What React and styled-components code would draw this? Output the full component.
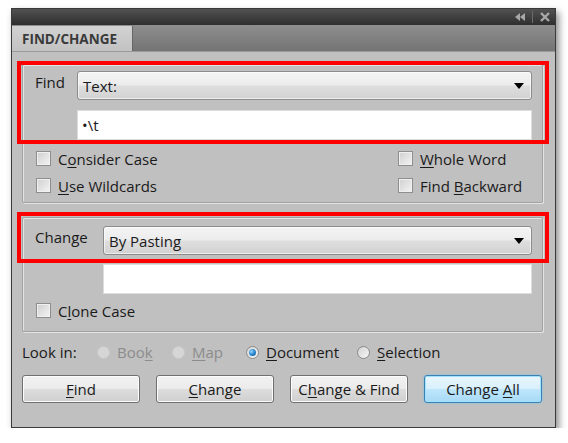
import React from "react";
import styled, { createGlobalStyle } from "styled-components";

const GlobalStyle = createGlobalStyle`
  body {
    margin: 0;
    background: #ffffff;
    font-family: "Open Sans", "Liberation Sans", sans-serif;
  }
  * {
    box-sizing: border-box;
  }
`;

const Window = styled.div`
  position: relative;
  margin: 8px 0 0 11px;
  width: 545px;
  height: 420px;
  border: 1px solid #3a3a3a;
  background: #c0c0c0;
  box-shadow: 3px 4px 7px rgba(0, 0, 0, 0.45);
  display: flex;
  flex-direction: column;
`;

const TitleBar = styled.div`
  height: 16px;
  background: linear-gradient(#525252, #2e2e2e);
  display: flex;
  justify-content: flex-end;
  align-items: center;
  padding-right: 2px;
`;

const TabBar = styled.div`
  height: 27px;
  background: linear-gradient(#8e8e8e, #747474);
  display: flex;
  align-items: flex-end;
  border-bottom: 1px solid #9a9a9a;
`;

const Tab = styled.div`
  width: 121px;
  height: 25px;
  background: linear-gradient(#d2d2d2, #c2c2c2);
  border-right: 1px solid #666;
  color: #3a3a3a;
  font-size: 13.5px;
  font-weight: 700;
  padding-left: 10px;
  display: flex;
  align-items: center;
`;

const Body = styled.div`
  flex: 1;
  padding: 12px 12px 0 10px;
  display: flex;
  flex-direction: column;
  color: #1a1a1a;
  font-size: 15px;
`;

const Group = styled.div`
  border: 1px solid #a2a2a2;
  border-radius: 2px;
  box-shadow: inset 1px 1px 0 #e4e4e4, 1px 1px 0 #e4e4e4;
  padding: ${(p) => p.$pt}px 10px ${(p) => p.$pb}px 12px;
  margin-bottom: ${(p) => p.$mb || 0}px;
`;

const FieldRow = styled.div`
  display: flex;
  align-items: center;
  margin-top: ${(p) => p.$mt || 0}px;
`;

const Label = styled.div`
  width: ${(p) => p.$w}px;
  flex: none;
  align-self: flex-start;
  line-height: 22px;
`;

const Select = styled.div`
  flex: 1;
  height: 29px;
  border: 1px solid #8c8c8c;
  border-radius: 3px;
  background: linear-gradient(#f4f4f4 0%, #ececec 48%, #dedede 52%, #d2d2d2 100%);
  box-shadow: inset 0 0 0 1px rgba(255, 255, 255, 0.6);
  display: flex;
  align-items: center;
  justify-content: space-between;
  padding: 0 7px 0 5px;
`;

const TextField = styled.div`
  flex: 1;
  height: 30px;
  background: #ffffff;
  border: 1px solid #dcdcdc;
  padding-left: 4px;
  display: flex;
  align-items: center;
  margin-left: ${(p) => p.$indent}px;
`;

const CheckGrid = styled.div`
  display: grid;
  grid-template-columns: 362px auto;
  grid-auto-rows: 27px;
  margin-top: ${(p) => p.$mt}px;
  padding-left: 1px;
`;

const CheckItem = styled.label`
  display: flex;
  align-items: center;
  gap: 7px;
`;

const Box = styled.span`
  width: 15px;
  height: 15px;
  border: 1px solid #8e8e8e;
  background: linear-gradient(135deg, #cfcfcf, #f4f4f4);
  box-shadow: inset 0 0 0 1px #f0f0f0;
`;

const Key = styled.span`
  text-decoration: underline;
  text-underline-offset: 2px;
  text-decoration-thickness: 1px;
`;

const LookRow = styled.div`
  display: flex;
  align-items: center;
  height: 26px;
  margin-top: 7px;
`;

const LookLabel = styled.div`
  width: 75px;
`;

const RadioItem = styled.div`
  width: ${(p) => p.$w}px;
  display: flex;
  align-items: center;
  gap: 7px;
  color: ${(p) => (p.$disabled ? "#8c8c8c" : "#1a1a1a")};
`;

const Radio = styled.span`
  width: 13px;
  height: 13px;
  border-radius: 50%;
  border: 1px solid ${(p) => (p.$disabled ? "#c9c9c9" : "#8a8a8a")};
  background: ${(p) => (p.$disabled ? "#d6d6d6" : "linear-gradient(135deg, #d4d4d4, #f6f6f6)")};
  display: flex;
  align-items: center;
  justify-content: center;

  &::after {
    content: "";
    display: ${(p) => (p.$checked ? "block" : "none")};
    width: 7px;
    height: 7px;
    border-radius: 50%;
    background: radial-gradient(circle at 35% 35%, #8fd3ff, #1a78c2 60%, #0d4f8a);
  }
`;

const ButtonRow = styled.div`
  display: grid;
  grid-template-columns: repeat(4, 118px);
  gap: 16px;
  margin-top: 10px;
`;

const Button = styled.div`
  height: 28px;
  border: 1px solid ${(p) => (p.$default ? "#3c7fb1" : "#707070")};
  border-radius: 3px;
  background: ${(p) =>
    p.$default
      ? "linear-gradient(#eaf6fd 0%, #d9f0fc 48%, #bee6fd 52%, #a7d9f5 100%)"
      : "linear-gradient(#f2f2f2 0%, #ebebeb 48%, #dddddd 52%, #cfcfcf 100%)"};
  box-shadow: ${(p) =>
    p.$default ? "inset 0 0 0 1px #9fe3ff, 0 0 2px #6cc4f0" : "inset 0 0 0 1px #fcfcfc"};
  display: flex;
  align-items: center;
  justify-content: center;
  color: #1a1a1a;
`;

const Highlight = styled.div`
  position: absolute;
  left: 5px;
  width: 532px;
  top: ${(p) => p.$top}px;
  height: ${(p) => p.$h}px;
  border: 4px solid #ff0000;
  pointer-events: none;
`;

function PanelIcons() {
  return (
    <svg width="38" height="12" viewBox="0 0 38 12">
      <path d="M0 6 L5 2 L5 10 Z M5 6 L10 2 L10 10 Z" fill="#a8a8a8" />
      <line x1="17.5" y1="0" x2="17.5" y2="12" stroke="#6a6a6a" />
      <path d="M26 2 L34 10 M34 2 L26 10" stroke="#a8a8a8" strokeWidth="2.4" />
    </svg>
  );
}

function Arrow() {
  return (
    <svg width="10" height="6" viewBox="0 0 10 6">
      <path d="M0 0 L10 0 L5 6 Z" fill="#000" />
    </svg>
  );
}

function Check({ children }) {
  return (
    <CheckItem>
      <Box />
      <span>{children}</span>
    </CheckItem>
  );
}

export default function App() {
  return (
    <>
      <GlobalStyle />
      <Window>
        <TitleBar>
          <PanelIcons />
        </TitleBar>
        <TabBar>
          <Tab>FIND/CHANGE</Tab>
        </TabBar>
        <Body>
          <Group $pt={6} $pb={3} $mb={14}>
            <FieldRow>
              <Label $w={42}>Find</Label>
              <Select>
                <span>Text:</span>
                <Arrow />
              </Select>
            </FieldRow>
            <FieldRow $mt={10}>
              <TextField $indent={42}>•\t</TextField>
            </FieldRow>
            <CheckGrid $mt={5}>
              <Check>
                C<Key>o</Key>nsider Case
              </Check>
              <Check>
                <Key>W</Key>hole Word
              </Check>
              <Check>
                <Key>U</Key>se Wildcards
              </Check>
              <Check>
                Find <Key>B</Key>ackward
              </Check>
            </CheckGrid>
          </Group>

          <Group $pt={8} $pb={7}>
            <FieldRow>
              <Label $w={68}>Change</Label>
              <Select>
                <span>By Pasting</span>
                <Arrow />
              </Select>
            </FieldRow>
            <FieldRow $mt={9}>
              <TextField $indent={68} />
            </FieldRow>
            <CheckGrid $mt={3}>
              <Check>
                C<Key>l</Key>one Case
              </Check>
            </CheckGrid>
          </Group>

          <LookRow>
            <LookLabel>Look in:</LookLabel>
            <RadioItem $w={75} $disabled>
              <Radio $disabled />
              <span>
                Boo<Key>k</Key>
              </span>
            </RadioItem>
            <RadioItem $w={74} $disabled>
              <Radio $disabled />
              <span>
                <Key>M</Key>ap
              </span>
            </RadioItem>
            <RadioItem $w={111}>
              <Radio $checked />
              <span>
                <Key>D</Key>ocument
              </span>
            </RadioItem>
            <RadioItem $w={100}>
              <Radio />
              <span>
                <Key>S</Key>election
              </span>
            </RadioItem>
          </LookRow>

          <ButtonRow>
            <Button>
              <span>
                <Key>F</Key>ind
              </span>
            </Button>
            <Button>
              <span>
                <Key>C</Key>hange
              </span>
            </Button>
            <Button>
              <span>
                C<Key>h</Key>ange &amp; Find
              </span>
            </Button>
            <Button $default>
              <span>
                Change <Key>A</Key>ll
              </span>
            </Button>
          </ButtonRow>
        </Body>
        <Highlight $top={52} $h={83} />
        <Highlight $top={203} $h={51} />
      </Window>
    </>
  );
}
